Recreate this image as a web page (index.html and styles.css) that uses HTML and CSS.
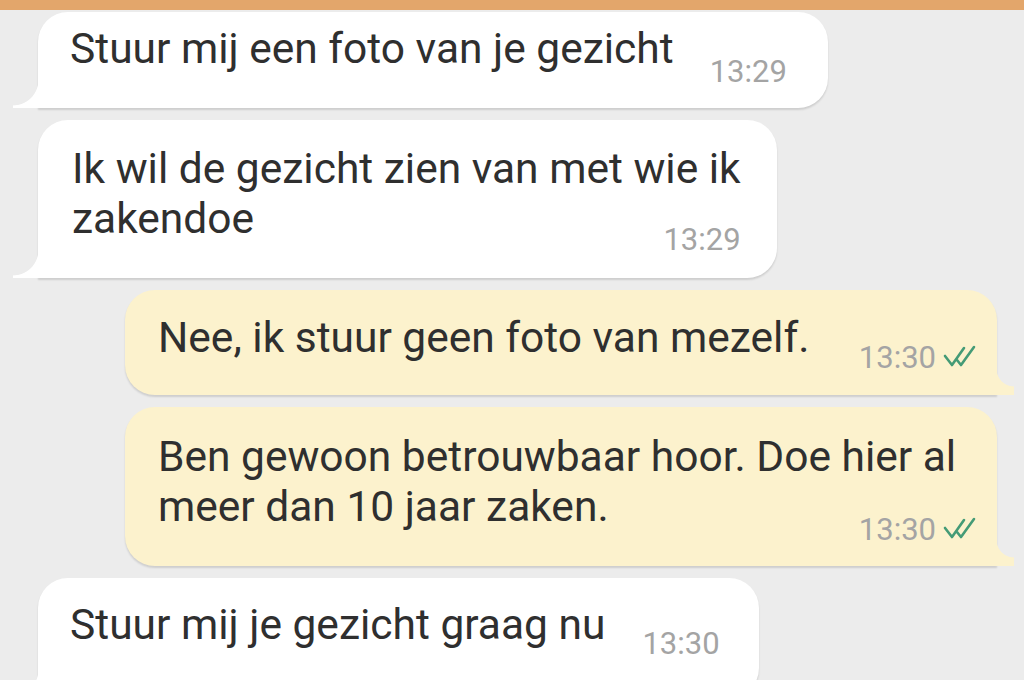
FILE: index.html
```html
<!DOCTYPE html>
<html lang="nl">
<head>
<meta charset="utf-8">
<title>Chat</title>
<link rel="stylesheet" href="styles.css">
</head>
<body>
<div class="topbar"></div>
<div class="chat">
  <div class="bubble in b1">
    <span class="text">Stuur mij een foto van je gezicht</span>
    <span class="meta">13:29</span>
  </div>
  <div class="bubble in b2 multi">
    <div class="text">Ik wil de gezicht zien van met wie ik<br>zakendoe</div>
    <div class="meta">13:29</div>
  </div>
  <div class="bubble out b3">
    <span class="text">Nee, ik stuur geen foto van mezelf.</span>
    <span class="meta">13:30<svg class="ticks" viewBox="0 0 36 24" width="36" height="24"><path d="M3 12 L10 21 L22 4 M15 16 L19 21 L32 3" fill="none" stroke="#449b76" stroke-width="2.6" stroke-linecap="round" stroke-linejoin="round"/></svg></span>
  </div>
  <div class="bubble out b4 multi">
    <div class="text">Ben gewoon betrouwbaar hoor. Doe hier al<br>meer dan 10 jaar zaken.</div>
    <div class="meta">13:30<svg class="ticks" viewBox="0 0 36 24" width="36" height="24"><path d="M3 12 L10 21 L22 4 M15 16 L19 21 L32 3" fill="none" stroke="#449b76" stroke-width="2.6" stroke-linecap="round" stroke-linejoin="round"/></svg></div>
  </div>
  <div class="bubble in b5">
    <span class="text">Stuur mij je gezicht graag nu</span>
    <span class="meta">13:30</span>
  </div>
</div>
</body>
</html>
```

FILE: styles.css
```css
html, body {
  margin: 0;
  padding: 0;
  background: #ececec;
  height: 100%;
  overflow: hidden;
}
body {
  font-family: Roboto, "Noto Sans", Arial, sans-serif;
  color: #2f2f2f;
}
.topbar {
  height: 10px;
  background: #e3a66b;
}
.chat {
  display: flex;
  flex-direction: column;
  gap: 12px;
  padding-top: 2px;
}
.bubble {
  position: relative;
  box-shadow: 0 2px 2px rgba(0, 0, 0, 0.13);
  display: flex;
  align-items: flex-start;
  box-sizing: border-box;
}
.bubble.multi {
  flex-direction: column;
}
.bubble.in {
  align-self: flex-start;
  margin-left: 38px;
  background: #ffffff;
  border-radius: 30px 30px 30px 0;
}
.bubble.in::before {
  content: "";
  position: absolute;
  left: -25px;
  bottom: 0;
  width: 25px;
  height: 28px;
  background: radial-gradient(circle at 0 0, transparent 25px, #ffffff 25.8px);
}
.bubble.out {
  align-self: stretch;
  margin: 0 27px 0 125px;
  background: #fcf2cd;
  border-radius: 30px 30px 0 30px;
}
.bubble.out::after {
  content: "";
  position: absolute;
  right: -17px;
  bottom: 0;
  width: 17px;
  height: 26px;
  background: radial-gradient(circle at 100% 0, transparent 17px, #fcf2cd 17.8px);
}
.text {
  font-size: 42.5px;
  line-height: 50px;
  white-space: nowrap;
}
.meta {
  font-size: 31px;
  line-height: 30px;
  color: #a4a4a4;
  display: flex;
  align-items: center;
  white-space: nowrap;
}
.ticks {
  margin-left: 6px;
  margin-top: -4px;
}
/* individual bubbles */
.b1 {
  height: 96px;
  padding: 12px 41px 0 32px;
}
.b1 .meta {
  margin-top: 33px;
  margin-left: 36px;
}
.b2 {
  height: 158px;
  padding: 24px 36px 0 34px;
}
.b2 .meta {
  align-self: flex-end;
  margin-top: -19px;
}
.b3 {
  height: 105px;
  padding: 23px 19px 0 33px;
}
.b3 .meta {
  margin-left: auto;
  margin-top: 30px;
}
.b4 {
  height: 159px;
  padding: 25px 19px 0 33px;
}
.b4 .meta {
  align-self: flex-end;
  margin-top: -17px;
}
.b5 {
  height: 120px;
  padding: 22px 39px 0 32px;
}
.b5 .meta {
  margin-top: 29px;
  margin-left: 37px;
}
```
